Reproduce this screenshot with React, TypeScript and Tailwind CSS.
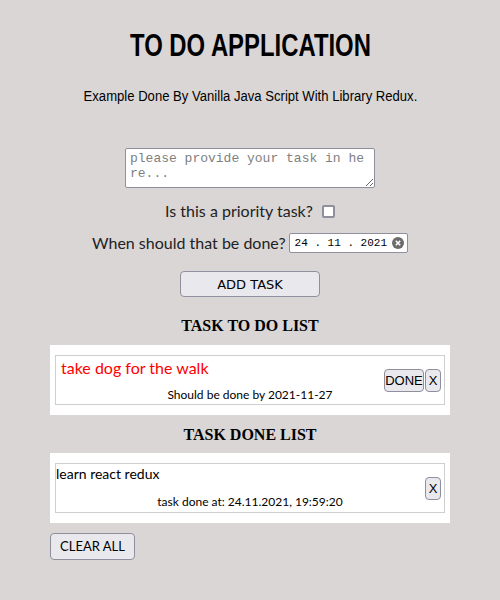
import React from 'react';

const btn =
  'bg-[#e9e9ed] border border-[#8f8f9d] rounded-[4px] text-black leading-none';

const ClearIcon: React.FC = () => (
  <svg width="12" height="12" viewBox="0 0 12 12" className="ml-[5px]">
    <circle cx="6" cy="6" r="6" fill="#6b6b6b" />
    <path d="M3.8 3.8 L8.2 8.2 M8.2 3.8 L3.8 8.2" stroke="#fff" strokeWidth="1.6" />
  </svg>
);

const App: React.FC = () => {
  return (
    <div className="min-h-[600px] w-[500px] bg-[#dad6d5] pt-[30px] pb-[39px]">
      <h1 className="text-center text-[31px] leading-[31px] font-bold text-black font-['Liberation_Sans',sans-serif]">
        <span className="inline-block scale-x-[0.77]">TO DO APPLICATION</span>
      </h1>
      <p className="mt-[27px] text-center text-[14px] leading-[16px] text-black font-['Liberation_Sans',sans-serif]">
        <span className="inline-block scale-x-[0.935] whitespace-nowrap">Example Done By Vanilla Java Script With Library Redux.</span>
      </p>

      <div className="mt-[44px] flex flex-col items-center font-['Lato',sans-serif] text-[16px] text-[#222]">
        <textarea
          placeholder="please provide your task in here..."
          className="w-[250px] h-[40px] bg-white border border-[#8f8f9d] rounded-[2px] px-[4px] py-[2px] text-[13px] leading-[15px] break-all font-['Liberation_Mono',monospace] placeholder:text-[#808080] outline-none"
        />
        <label className="mt-[13px] flex items-center h-[20px]">
          Is this a priority task?
          <span className="ml-[9px] w-[13px] h-[13px] border-2 border-[#8f8f9d] rounded-[2px] bg-white" />
        </label>
        <div className="mt-[12px] flex items-center h-[20px]">
          When should that be done?
          <div className="ml-[3px] flex items-center h-[20px] border border-[#8f8f9d] rounded-[2px] bg-white pl-[5px] pr-[3px] text-[11px] font-['Liberation_Mono',monospace] text-black">
            24 . 11 . 2021
            <ClearIcon />
          </div>
        </div>
        <button className={`${btn} mt-[18px] w-[140px] h-[26px] text-[13px] font-['DejaVu_Sans','Liberation_Sans',sans-serif]`}>
          ADD TASK
        </button>
      </div>

      <h2 className="mt-[20px] text-center text-[16px] leading-[18px] font-bold text-black font-['Liberation_Serif',serif]">
        TASK TO DO LIST
      </h2>
      <div className="mx-[50px] mt-[10px] bg-white px-[5px] py-[10px]">
        <div className="border border-[#cfcfcf] grid h-[50px] font-['Lato',sans-serif]">
          <div className="[grid-area:1/1] flex flex-col">
            <span className="pl-[5px] pt-[2px] text-[16px] leading-[20px] text-[#ff0000]">take dog for the walk</span>
            <span className="mt-[9px] text-center text-[12px] leading-[16px] text-black">Should be done by 2021-11-27</span>
          </div>
          <div className="[grid-area:1/1] justify-self-end self-center flex gap-[1px] pr-[3px]">
            <button className={`${btn} h-[23px] w-[40px] text-[13px] font-['Liberation_Sans',sans-serif]`}>DONE</button>
            <button className={`${btn} h-[23px] w-[16px] text-[13px] font-['Liberation_Sans',sans-serif]`}>X</button>
          </div>
        </div>
      </div>

      <h2 className="mt-[11px] text-center text-[16px] leading-[18px] font-bold text-black font-['Liberation_Serif',serif]">
        TASK DONE LIST
      </h2>
      <div className="mx-[50px] mt-[9px] bg-white px-[5px] py-[10px]">
        <div className="border border-[#cfcfcf] grid h-[50px] font-['Lato',sans-serif]">
          <div className="[grid-area:1/1] flex flex-col">
            <span className="text-[14px] leading-[20px] text-black">learn react redux</span>
            <span className="mt-[10px] text-center text-[12px] leading-[16px] text-black">task done at: 24.11.2021, 19:59:20</span>
          </div>
          <div className="[grid-area:1/1] justify-self-end self-center flex pr-[3px]">
            <button className={`${btn} h-[23px] w-[16px] text-[13px] font-['Liberation_Sans',sans-serif]`}>X</button>
          </div>
        </div>
      </div>

      <button className={`${btn} ml-[50px] mt-[10px] w-[85px] h-[27px] text-[13px] font-['Lato',sans-serif]`}>
        CLEAR ALL
      </button>
    </div>
  );
};

export default App;
